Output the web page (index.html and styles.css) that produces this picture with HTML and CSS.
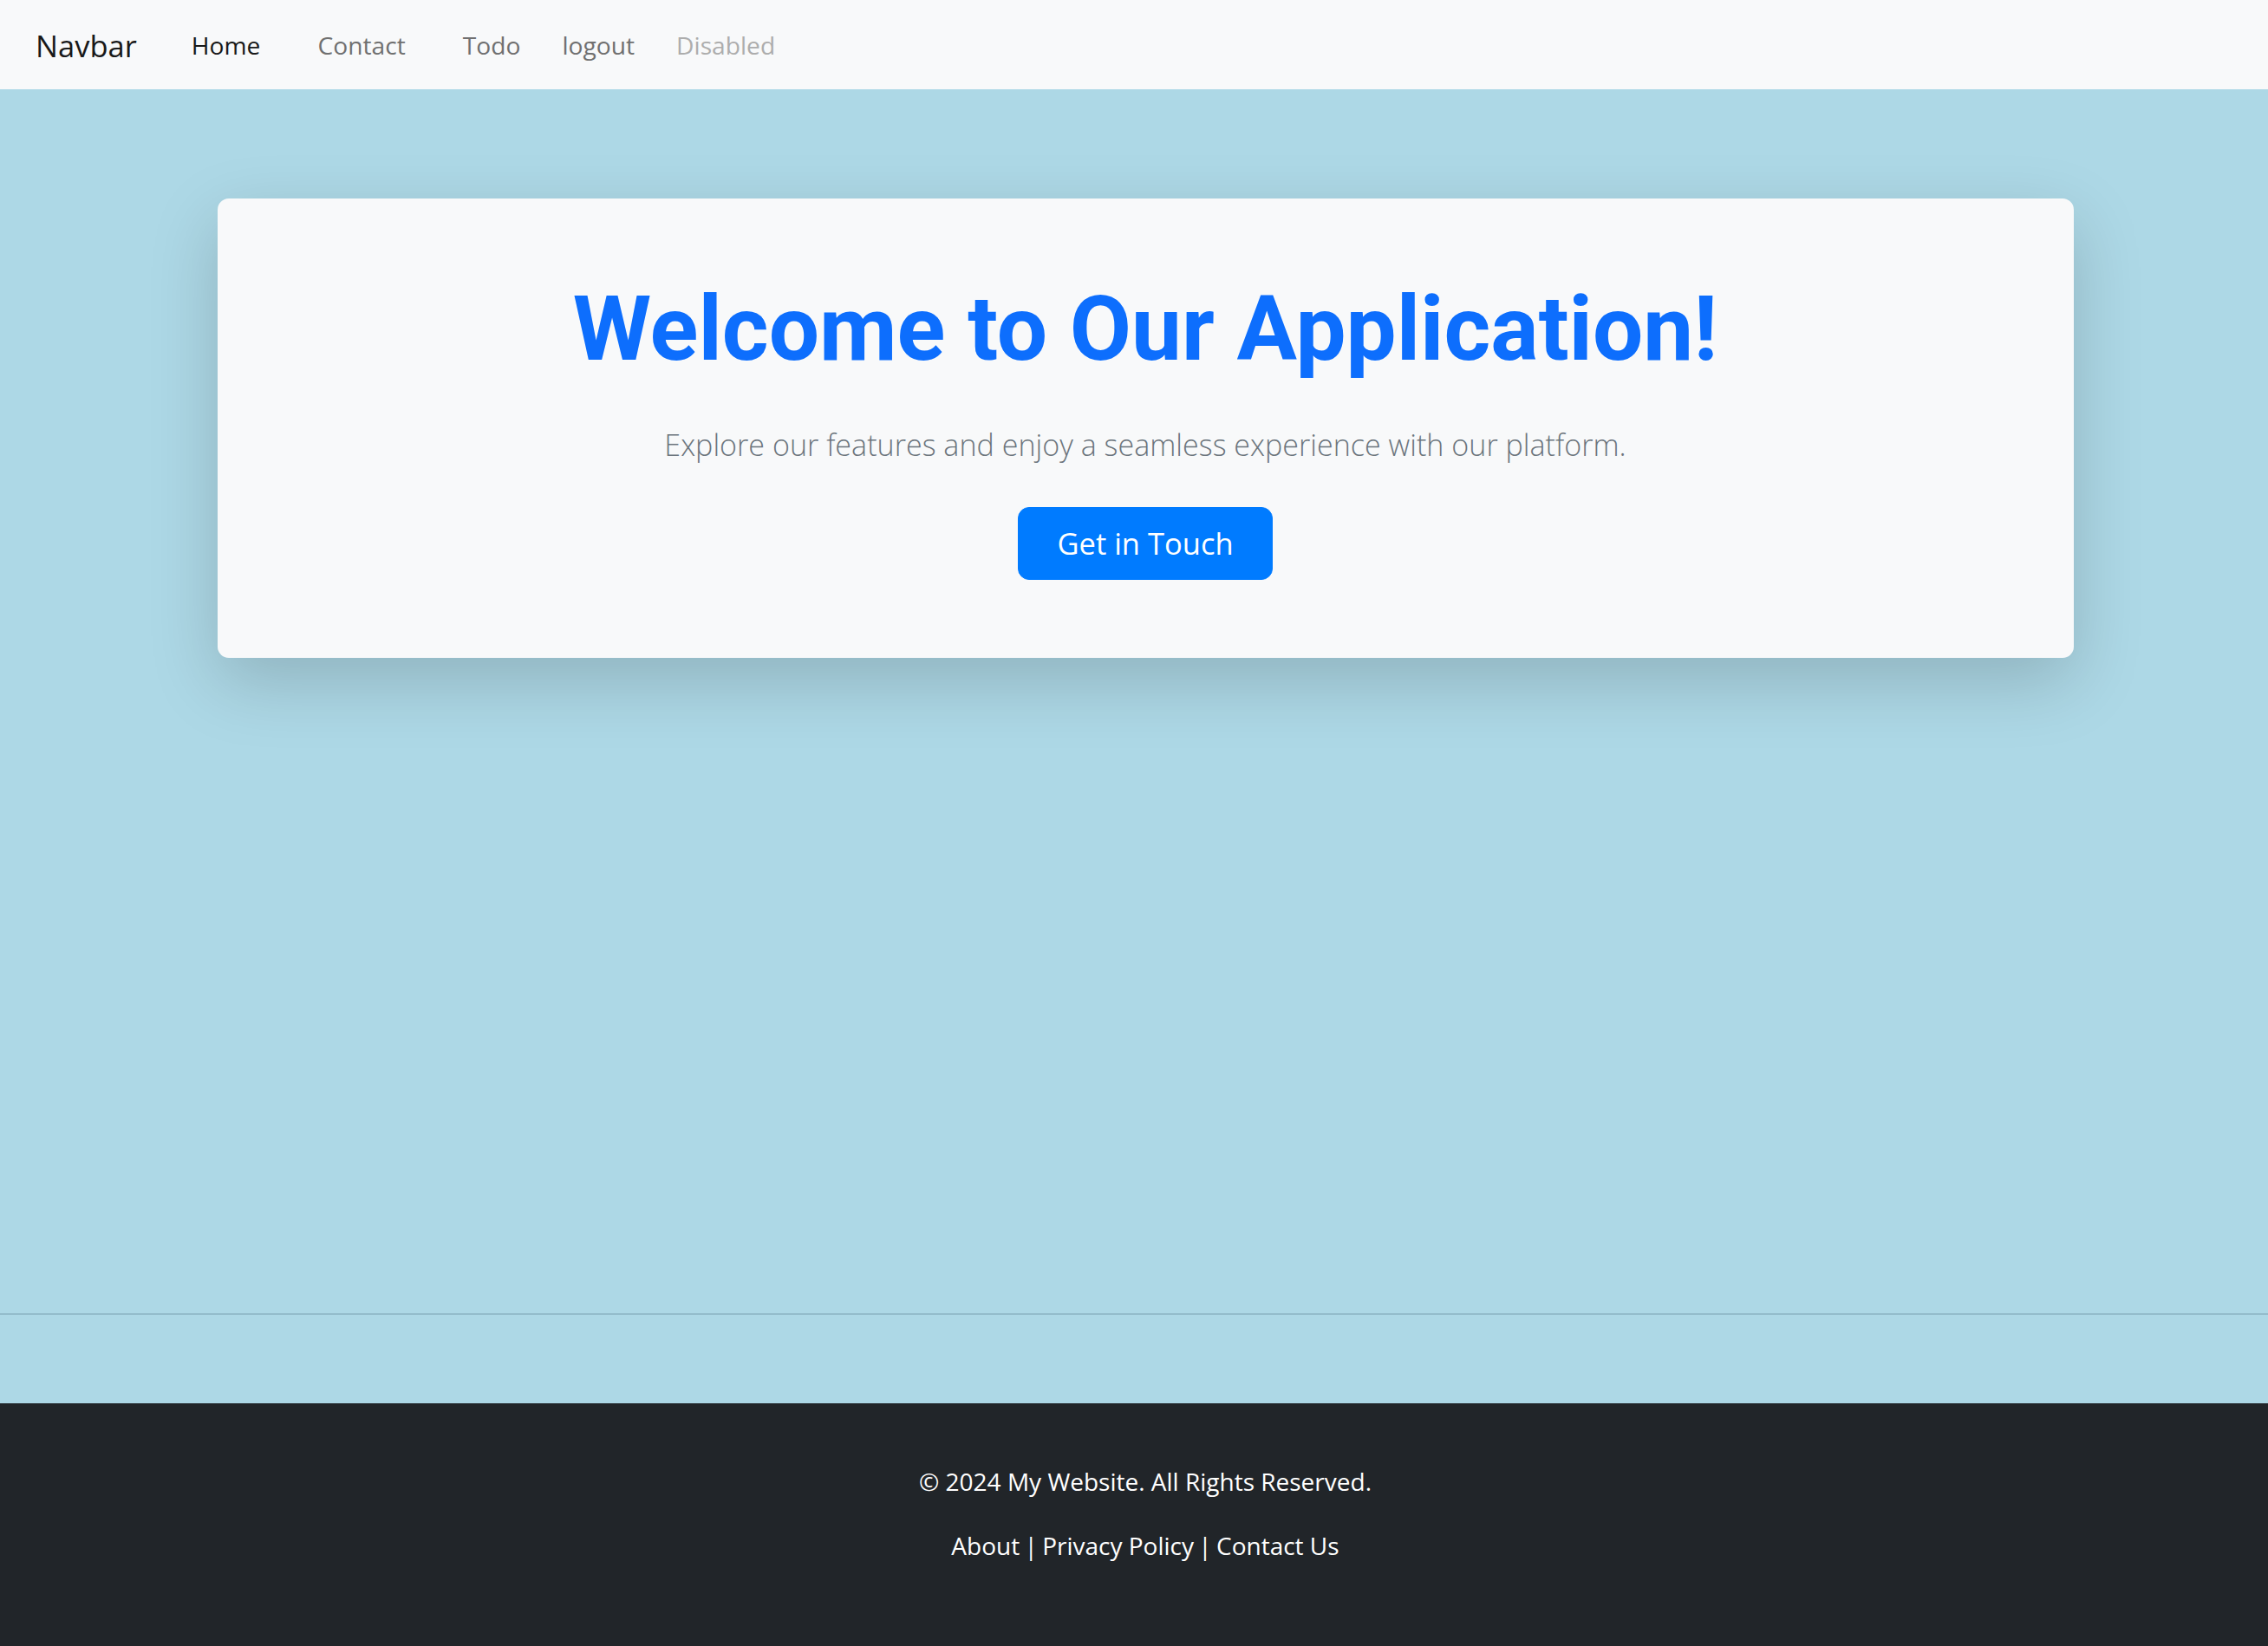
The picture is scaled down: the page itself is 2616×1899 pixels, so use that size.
FILE: index.html
```html
<!DOCTYPE html>
<html lang="en">
<head>
<meta charset="utf-8">
<title>My Website</title>
<link rel="stylesheet" href="styles.css">
</head>
<body>
<nav class="navbar">
  <a class="brand" href="#">Navbar</a>
  <ul class="nav">
    <li><a class="nav-link active" href="#">Home</a></li>
    <li><a class="nav-link wide" href="#">Contact</a></li>
    <li><a class="nav-link wide" href="#">Todo</a></li>
    <li><a class="nav-link" href="#">logout</a></li>
    <li><a class="nav-link disabled" href="#">Disabled</a></li>
  </ul>
</nav>
<main class="main">
  <section class="hero">
    <h1 class="hero-title">Welcome to Our Application!</h1>
    <p class="hero-lead">Explore our features and enjoy a seamless experience with our platform.</p>
    <a class="btn-primary" href="#">Get in Touch</a>
  </section>
</main>
<hr class="divider">
<footer class="footer">
  <p class="copy">© 2024 My Website. All Rights Reserved.</p>
  <p class="links"><a href="#">About</a> <span class="sep">|</span> <a href="#">Privacy Policy</a> <span class="sep">|</span> <a href="#">Contact Us</a></p>
</footer>
</body>
</html>
```
FILE: styles.css
```css
* { box-sizing: border-box; }
html, body { margin: 0; padding: 0; }
body {
  min-height: 100vh;
  display: flex;
  flex-direction: column;
  background: #add8e6;
  font-family: "Open Sans", "Noto Sans", sans-serif;
  color: #212529;
}
a { text-decoration: none; }

.navbar {
  height: 103px;
  background: #f8f9fa;
  display: flex;
  align-items: center;
  padding: 2px 0 0 41px;
}
.brand {
  font-size: 34.5px;
  color: #191919;
  margin-right: 63px;
  line-height: 1.5;
}
.nav {
  list-style: none;
  margin: 0;
  padding: 0;
  display: flex;
  gap: 48px;
}
.nav-link {
  font-size: 28.2px;
  color: #707070;
  line-height: 1.5;
}
.nav-link.wide { margin-left: 18px; }
.nav-link.active { color: #191919; }
.nav-link.disabled { color: #adadad; }

.main {
  flex: 1;
  padding: 126px 0 0 26px;
}
.hero {
  width: 2141px;
  margin: 0 auto;
  background: #f8f9fa;
  border-radius: 13px;
  box-shadow: 0 27px 80px rgba(0, 0, 0, 0.175);
  padding: 89px 40px 90px;
  text-align: center;
}
.hero-title {
  font-family: Roboto, "Noto Sans", sans-serif;
  font-weight: 700;
  font-size: 103.4px;
  line-height: 1.2;
  color: #0d6efd;
  margin: 0 0 46px;
}
.hero-lead {
  font-size: 34.1px;
  font-weight: 300;
  line-height: 1.5;
  color: #6c757d;
  margin: 0 0 46px;
}
.btn-primary {
  display: inline-block;
  background: #007bff;
  color: #fff;
  font-size: 34.5px;
  line-height: 1.5;
  padding: 15px 44px;
  border: 1px solid #007bff;
  border-radius: 13px;
}

.divider {
  margin: 0 0 102px;
  border: 0;
  border-top: 2px solid #93bccb;
}

.footer {
  background: #212529;
  color: #fff;
  text-align: center;
  padding: 69px 0 63px 26px;
  font-size: 28px;
  line-height: 1.5;
}
.footer p { margin: 0 0 32px; }
.footer .sep { margin: 0 -2px; }
.footer a { color: #fff; }
```
